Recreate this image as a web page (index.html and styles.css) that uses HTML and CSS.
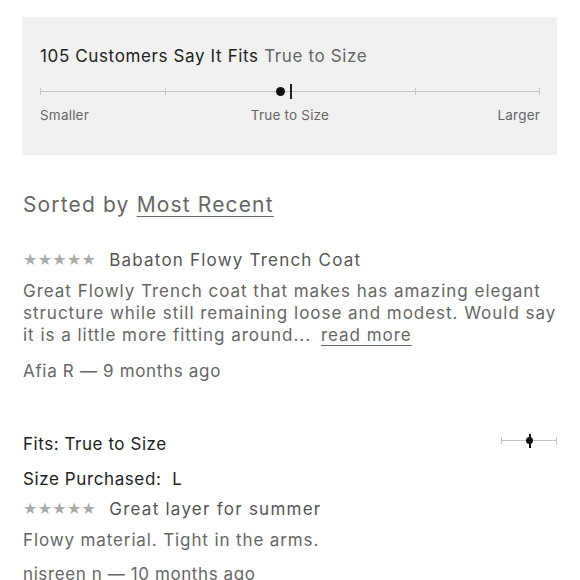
FILE: index.html
```html
<!DOCTYPE html>
<html>
<head>
<meta charset="utf-8">
<link rel="stylesheet" href="styles.css">
</head>
<body>
<div class="page">
  <section class="fit-box">
    <h2 class="fit-title">105 Customers Say It Fits <span class="fit-value">True to Size</span></h2>
    <div class="scale">
      <div class="scale-line"></div>
      <span class="tick t0"></span>
      <span class="tick t1"></span>
      <span class="tick t2"></span>
      <span class="tick t3"></span>
      <span class="tick t4"></span>
      <span class="dot"></span>
      <span class="marker"></span>
    </div>
    <div class="scale-labels">
      <span class="lab-l">Smaller</span>
      <span class="lab-c">True to Size</span>
      <span class="lab-r">Larger</span>
    </div>
  </section>

  <div class="sort">Sorted by <a class="sort-link">Most Recent</a></div>

  <article class="review">
    <div class="review-head"><span class="stars">★★★★★</span><span class="review-title">Babaton Flowy Trench Coat</span></div>
    <p class="review-body">Great Flowly Trench coat that makes has amazing elegant structure while still remaining loose and modest. Would say it is a little more fitting around... <a class="more">read more</a></p>
    <div class="author">Afia R — 9 months ago</div>
  </article>

  <article class="review second">
    <div class="fits-row">
      <span class="fits">Fits: True to Size</span>
      <span class="mini-scale"><span class="mini-line"></span><span class="mini-tick l"></span><span class="mini-tick r"></span><span class="mini-dot"></span><span class="mini-bar"></span></span>
    </div>
    <div class="size">Size Purchased:&nbsp; L</div>
    <div class="review-head"><span class="stars">★★★★★</span><span class="review-title t2">Great layer for summer</span></div>
    <p class="review-body b2">Flowy material. Tight in the arms.</p>
    <div class="author a2">nisreen n — 10 months ago</div>
  </article>
</div>
</body>
</html>
```
FILE: styles.css
```css
* { box-sizing: border-box; }
html, body { margin: 0; padding: 0; background: #fff; }
body {
  font-family: "Inter", "Liberation Sans", sans-serif;
  color: #666;
  overflow: hidden;
}
.page { padding: 17px 23px 0 22px; }

.fit-box {
  background: #f1f1f1;
  height: 138px;
  padding: 28px 17px 0 18px;
}
.fit-title {
  margin: 0;
  font-size: 17px;
  font-weight: 400;
  color: #222;
  line-height: 22px;
  letter-spacing: 0.63px;
}
.fit-value { color: #666; }

.scale {
  position: relative;
  height: 16px;
  margin-top: 17px;
}
.scale-line {
  position: absolute;
  left: 0; right: 0; top: 7px;
  height: 1px;
  background: #c4c4c4;
}
.tick {
  position: absolute;
  top: 4px;
  width: 1px; height: 7px;
  background: #c4c4c4;
}
.t0 { left: 0; }
.t1 { left: 25%; }
.t2 { left: 50%; }
.t3 { left: 75%; }
.t4 { right: 0; }
.dot {
  position: absolute;
  left: calc(50% - 14px);
  top: 3px;
  width: 9px; height: 9px;
  border-radius: 50%;
  background: #111;
}
.marker {
  position: absolute;
  left: 50%;
  top: 0;
  width: 2px; height: 15px;
  background: #222;
}
.scale-labels {
  display: grid;
  grid-template-columns: 1fr auto 1fr;
  margin-top: 6px;
  font-size: 13.5px;
  color: #666;
  line-height: 18px;
  letter-spacing: 0.2px;
}
.lab-l { justify-self: start; }
.lab-c { justify-self: center; }
.lab-r { justify-self: end; }

.sort {
  margin-top: 36px;
  font-size: 21px;
  line-height: 28px;
  color: #666;
  padding-left: 1px;
  letter-spacing: 1.15px;
}
.sort-link { text-decoration: underline; text-underline-offset: 4px; text-decoration-thickness: 1px; }

.review { padding-left: 1px; }
.review-head {
  display: flex;
  align-items: center;
  gap: 13px;
  margin-top: 30px;
  line-height: 22px;
}
.stars {
  font-family: "DejaVu Sans", sans-serif;
  font-size: 16px;
  color: #aaa;
  letter-spacing: 0.3px;
}
.review-title { font-size: 17px; color: #555; letter-spacing: 1.2px; }
.review-title.t2 { letter-spacing: 1.25px; }
.review-body {
  margin: 9px -8px 0 0;
  font-size: 17px;
  line-height: 22.2px;
  color: #666;
  letter-spacing: 0.98px;
}
.review-body.b2 { letter-spacing: 0.88px; }
.more { color: #666; text-decoration: underline; text-underline-offset: 4px; margin-left: 4px; }
.author {
  margin-top: 13px;
  font-size: 17px;
  line-height: 22px;
  color: #666;
  letter-spacing: 0.67px;
}
.author.a2 { letter-spacing: 0.6px; }

.second .fits-row {
  display: flex;
  justify-content: space-between;
  align-items: center;
  margin-top: 51px;
  line-height: 22px;
}
.fits { font-size: 17px; color: #222; letter-spacing: 0.55px; }
.mini-scale { position: relative; width: 56px; height: 14px; margin-top: -6px; }
.mini-line { position: absolute; left: 0; right: 0; top: 6px; height: 1px; background: #c4c4c4; }
.mini-tick { position: absolute; top: 3px; width: 1px; height: 7px; background: #c4c4c4; }
.mini-tick.l { left: 0; }
.mini-tick.r { right: 0; }
.mini-dot { position: absolute; left: 25px; top: 3px; width: 7px; height: 7px; border-radius: 50%; background: #111; }
.mini-bar { position: absolute; left: 28px; top: 0; width: 2px; height: 14px; background: #111; }
.size { margin-top: 13px; font-size: 17px; color: #222; line-height: 22px; letter-spacing: 0.6px; }
.second .review-head { margin-top: 8px; }
.second .review-body { margin-top: 9px; }
.second .author { margin-top: 12px; }
```
